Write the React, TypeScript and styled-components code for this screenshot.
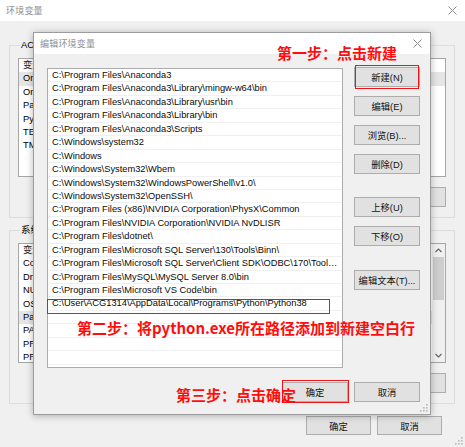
import React from "react";
import styled, { createGlobalStyle } from "styled-components";

const UI_FONT = `"Liberation Sans", "Noto Sans CJK SC", sans-serif`;
const CJK_BOLD = `"Noto Sans CJK SC", "Noto Sans", sans-serif`;

const GlobalStyle = createGlobalStyle`
  html, body { margin: 0; padding: 0; background: #f0f0f0; }
  body { font-family: ${UI_FONT}; }
  *, *::before, *::after { box-sizing: border-box; }
`;

const Desktop = styled.div`
  position: relative;
  width: 465px;
  height: 447px;
  overflow: hidden;
  background: #f0f0f0;
  font-family: ${UI_FONT};
  font-size: 9.3px;
  color: #000;
`;

/* ---------- generic window parts ---------- */
const Window = styled.div`
  position: relative;
  display: flex;
  flex-direction: column;
  width: 100%;
  height: 100%;
`;

const TitleBar = styled.div<{ $h: number; $pr: number }>`
  flex: none;
  height: ${(p) => p.$h}px;
  background: #fff;
  display: flex;
  align-items: center;
  justify-content: space-between;
  padding: 0 ${(p) => p.$pr}px 0 6px;
`;

const TitleText = styled.span`
  color: #8f8f8f;
  font-size: 9px;
  letter-spacing: 0.2px;
`;

const CloseGlyph = styled.svg`
  width: 9px;
  height: 9px;
  display: block;
`;

const Close = () => (
  <CloseGlyph viewBox="0 0 9 9">
    <path d="M0.5 0.5 L8.5 8.5 M8.5 0.5 L0.5 8.5" stroke="#8a8a8a" strokeWidth="1" fill="none" />
  </CloseGlyph>
);

const Button = styled.div<{ $w: number; $h?: number }>`
  flex: none;
  width: ${(p) => p.$w}px;
  height: ${(p) => p.$h ?? 20}px;
  background: #e1e1e1;
  border: 1px solid #adadad;
  display: flex;
  align-items: center;
  justify-content: center;
  color: #111;
  font-size: 9.3px;
  white-space: nowrap;
`;

const Grip = styled.svg`
  position: absolute;
  right: 2px;
  bottom: 2px;
  width: 8px;
  height: 8px;
`;

const ResizeGrip = () => (
  <Grip viewBox="0 0 8 8">
    {[
      [6, 0],
      [6, 3],
      [3, 3],
      [6, 6],
      [3, 6],
      [0, 6],
    ].map(([x, y], i) => (
      <rect key={i} x={x} y={y} width="1.6" height="1.6" fill="#b9b9b9" />
    ))}
  </Grip>
);

/* ---------- background window ---------- */
const MainClient = styled.div`
  flex: 1;
  display: flex;
  flex-direction: column;
  padding: 18px 10px 0 9px;
`;

const GroupBox = styled.fieldset<{ $mt: number }>`
  margin: ${(p) => p.$mt}px 0 0 0;
  padding: 7px 8px 10px 8px;
  border: 1px solid #dcdcdc;
  min-width: 0;
  display: flex;
  flex-direction: column;
  gap: 10px;
`;

const Legend = styled.legend`
  padding: 0 1px;
  margin-left: 2px;
  line-height: 12px;
  font-size: 9.5px;
  color: #000;
`;

const BgList = styled.div<{ $h: number }>`
  position: relative;
  height: ${(p) => p.$h}px;
  background: #fff;
  border: 1px solid #a6a6a6;
  overflow: hidden;
`;

const BgRow = styled.div<{ $sel?: boolean }>`
  height: 13.4px;
  line-height: 13.4px;
  padding-left: 4px;
  white-space: nowrap;
  background: ${(p) => (p.$sel ? "#e5e5e5" : "transparent")};
`;

const BgHeader = styled(BgRow)`
  color: #222;
`;

const ScrollTrack = styled.div`
  position: absolute;
  right: 0;
  top: 0;
  bottom: 0;
  width: 13px;
  background: #f0f0f0;
  display: flex;
  flex-direction: column;
  align-items: center;
`;

const ScrollArrow = styled.svg`
  flex: none;
  width: 13px;
  height: 13px;
  display: block;
`;

const ScrollThumb = styled.div`
  width: 11px;
  height: 43px;
  background: #cdcdcd;
`;

const ScrollFill = styled.div`
  flex: 1;
`;

const ButtonRow = styled.div<{ $gap: number; $mr?: number; $mt?: number }>`
  display: flex;
  justify-content: flex-end;
  gap: ${(p) => p.$gap}px;
  margin-right: ${(p) => p.$mr ?? 0}px;
  margin-top: ${(p) => p.$mt ?? 0}px;
`;

/* ---------- foreground dialog ---------- */
const Dialog = styled.div`
  position: absolute;
  left: 33px;
  top: 32px;
  width: 398px;
  height: 383px;
  border: 1px solid #9c9c9c;
  box-shadow: 0 1px 7px rgba(0, 0, 0, 0.28);
  background: #f0f0f0;
  display: flex;
  flex-direction: column;
`;

const DialogBody = styled.div`
  flex: 1;
  display: flex;
  flex-direction: column;
  padding: 14px 10px 0 13px;
`;

const DialogMain = styled.div`
  display: flex;
  gap: 11px;
`;

const PathList = styled.div`
  flex: none;
  width: 296px;
  height: 300px;
  background: #fff;
  border: 1px solid #acacac;
  overflow: hidden;
`;

const PathRow = styled.div`
  height: 13.45px;
  line-height: 13px;
  padding: 0 4px;
  border-bottom: 1px solid #f0f0f0;
  white-space: nowrap;
  overflow: hidden;
  text-overflow: ellipsis;
  color: #0a0a0a;
`;

const SideButtons = styled.div`
  display: flex;
  flex-direction: column;
  gap: 9px;
  margin-top: -1px;
`;

const Spacer = styled.div<{ $h: number }>`
  height: ${(p) => p.$h}px;
`;

/* ---------- annotations ---------- */
const Note = styled.div<{ $x: number; $y: number }>`
  position: absolute;
  left: ${(p) => p.$x}px;
  top: ${(p) => p.$y}px;
  font-family: ${CJK_BOLD};
  font-weight: 700;
  font-size: 15px;
  line-height: 18px;
  color: #ff0d0d;
  white-space: nowrap;
`;

const Mark = styled.div<{ $x: number; $y: number; $w: number; $h: number }>`
  position: absolute;
  left: ${(p) => p.$x}px;
  top: ${(p) => p.$y}px;
  width: ${(p) => p.$w}px;
  height: ${(p) => p.$h}px;
  border: 1.5px solid #f01414;
`;

const paths = [
  "C:\\Program Files\\Anaconda3",
  "C:\\Program Files\\Anaconda3\\Library\\mingw-w64\\bin",
  "C:\\Program Files\\Anaconda3\\Library\\usr\\bin",
  "C:\\Program Files\\Anaconda3\\Library\\bin",
  "C:\\Program Files\\Anaconda3\\Scripts",
  "C:\\Windows\\system32",
  "C:\\Windows",
  "C:\\Windows\\System32\\Wbem",
  "C:\\Windows\\System32\\WindowsPowerShell\\v1.0\\",
  "C:\\Windows\\System32\\OpenSSH\\",
  "C:\\Program Files (x86)\\NVIDIA Corporation\\PhysX\\Common",
  "C:\\Program Files\\NVIDIA Corporation\\NVIDIA NvDLISR",
  "C:\\Program Files\\dotnet\\",
  "C:\\Program Files\\Microsoft SQL Server\\130\\Tools\\Binn\\",
  "C:\\Program Files\\Microsoft SQL Server\\Client SDK\\ODBC\\170\\Tools\\...",
  "C:\\Program Files\\MySQL\\MySQL Server 8.0\\bin",
  "C:\\Program Files\\Microsoft VS Code\\bin",
  "C:\\User\\ACG1314\\AppData\\Local\\Programs\\Python\\Python38",
  "",
  "",
  "",
  "",
  "",
];

const userVars = ["OneDrive", "OneDriveConsumer", "Path", "PyCharm Community Edition", "TEMP", "TMP"];
const sysVars = [
  "ComSpec",
  "DriverData",
  "NUMBER_OF_PROCESSORS",
  "OS",
  "Path",
  "PATHEXT",
  "PROCESSOR_ARCHITECTURE",
  "PROCESSOR_IDENTIFIER",
];

export default function App() {
  return (
    <Desktop>
      <GlobalStyle />
      <Window>
        <TitleBar $h={21} $pr={8}>
          <TitleText>环境变量</TitleText>
          <Close />
        </TitleBar>
        <MainClient>
          <GroupBox $mt={0}>
            <Legend>ACG1314 的用户变量(U)</Legend>
            <BgList $h={119}>
              <BgHeader>变量</BgHeader>
              {userVars.map((v, i) => (
                <BgRow key={v} $sel={i === 0}>
                  {v}
                </BgRow>
              ))}
            </BgList>
            <ButtonRow $gap={7}>
              <Button $w={75}>新建(N)...</Button>
              <Button $w={75}>编辑(E)...</Button>
              <Button $w={75}>删除(D)</Button>
            </ButtonRow>
          </GroupBox>
          <GroupBox $mt={6}>
            <Legend>系统变量(S)</Legend>
            <BgList $h={120}>
              <BgHeader>变量</BgHeader>
              {sysVars.map((v, i) => (
                <BgRow key={v} $sel={i === 4}>
                  {v}
                </BgRow>
              ))}
              <ScrollTrack>
                <ScrollArrow viewBox="0 0 13 13">
                  <path d="M3.5 8 L6.5 5 L9.5 8" stroke="#606060" strokeWidth="1.1" fill="none" />
                </ScrollArrow>
                <ScrollThumb />
                <ScrollFill />
                <ScrollArrow viewBox="0 0 13 13">
                  <path d="M3.5 5 L6.5 8 L9.5 5" stroke="#606060" strokeWidth="1.1" fill="none" />
                </ScrollArrow>
              </ScrollTrack>
            </BgList>
            <ButtonRow $gap={7}>
              <Button $w={75}>新建(W)...</Button>
              <Button $w={75}>编辑(I)...</Button>
              <Button $w={75}>删除(L)</Button>
            </ButtonRow>
          </GroupBox>
          <ButtonRow $gap={6} $mr={13} $mt={12}>
            <Button $w={65} $h={19}>确定</Button>
            <Button $w={65} $h={19}>取消</Button>
          </ButtonRow>
        </MainClient>
        <ResizeGrip />
      </Window>

      <Dialog>
        <TitleBar $h={21} $pr={8}>
          <TitleText>编辑环境变量</TitleText>
          <Close />
        </TitleBar>
        <DialogBody>
          <DialogMain>
            <PathList>
              {paths.map((p, i) => (
                <PathRow key={i}>{p}</PathRow>
              ))}
            </PathList>
            <SideButtons>
              <Button $w={66}>新建(N)</Button>
              <Button $w={66}>编辑(E)</Button>
              <Button $w={66}>浏览(B)...</Button>
              <Button $w={66}>删除(D)</Button>
              <Spacer $h={5} />
              <Button $w={66}>上移(U)</Button>
              <Button $w={66}>下移(O)</Button>
              <Spacer $h={6} />
              <Button $w={66}>编辑文本(T)...</Button>
            </SideButtons>
          </DialogMain>
          <ButtonRow $gap={6} $mt={14}>
            <Button $w={66}>确定</Button>
            <Button $w={66}>取消</Button>
          </ButtonRow>
        </DialogBody>
        <ResizeGrip />
      </Dialog>

      <Mark $x={355} $y={65} $w={64} $h={24} />
      <Mark $x={47} $y={299} $w={283} $h={15} />
      <Mark $x={282} $y={380} $w={67} $h={23} />
      <Note $x={277} $y={44}>第一步：点击新建</Note>
      <Note $x={77} $y={319}>第二步：将python.exe所在路径添加到新建空白行</Note>
      <Note $x={176} $y={386}>第三步：点击确定</Note>
    </Desktop>
  );
}
